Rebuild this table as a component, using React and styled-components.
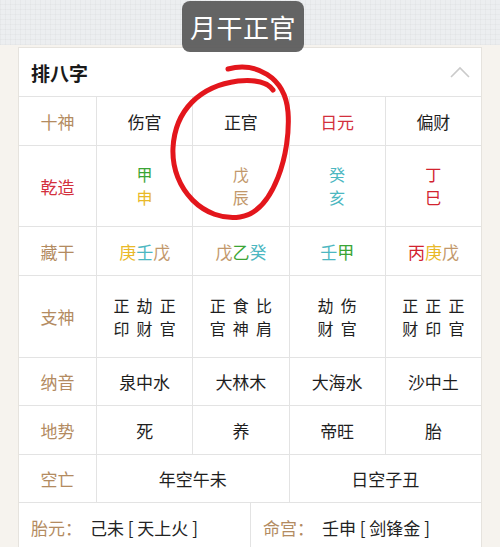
import React from "react";
import styled, { createGlobalStyle } from "styled-components";

const GlobalStyle = createGlobalStyle`
  html, body {
    margin: 0;
    padding: 0;
    background: #f6f3ee;
    overflow: hidden;
  }
  body {
    font-family: "Noto Sans CJK SC", "Noto Sans", sans-serif;
    color: #222;
  }
`;

const Page = styled.div`
  position: relative;
  width: 500px;
  height: 547px;
  overflow: hidden;
  background: #f6f3ee;
`;

const TopBar = styled.div`
  height: 45px;
  background-color: #eceef0;
  background-image: repeating-linear-gradient(
      0deg,
      rgba(0, 0, 0, 0.025) 0 1px,
      transparent 1px 5px
    ),
    repeating-linear-gradient(
      90deg,
      rgba(0, 0, 0, 0.025) 0 1px,
      transparent 1px 5px
    );
`;

const Body = styled.div`
  padding: 2px 18px 0;
`;

const Card = styled.div`
  background: #fff;
  border: 1px solid #e6e3de;
  border-bottom: none;
`;

const CardHeader = styled.div`
  display: flex;
  align-items: center;
  justify-content: space-between;
  height: 48px;
  padding: 0 10px 0 12px;
  border-bottom: 1px solid #e3e3e3;
`;

const CardTitle = styled.div`
  font-size: 19px;
  font-weight: 700;
  color: #1a1a1a;
`;

const Row = styled.div`
  display: grid;
  grid-template-columns: 77px repeat(4, 1fr);
  height: ${({ $h }) => $h}px;
  border-bottom: 1px solid #e3e3e3;
`;

const Label = styled.div`
  display: flex;
  align-items: center;
  justify-content: center;
  font-size: 17px;
  color: ${({ $red }) => ($red ? "#d3303d" : "#b38b61")};
`;

const Cell = styled.div`
  display: flex;
  align-items: center;
  justify-content: center;
  border-left: 1px solid #e3e3e3;
  font-size: 17px;
  color: ${({ $color }) => $color || "#1e1e1e"};
  grid-column: span ${({ $span }) => $span || 1};
`;

const Stack = styled.div`
  display: flex;
  flex-direction: column;
  align-items: center;
  font-size: 16px;
  line-height: 23px;
  color: #1e1e1e;
`;

const Ch = styled.span`
  color: ${({ $c }) => $c};
`;

const StackCh = styled.div`
  color: ${({ $c }) => $c || "inherit"};
`;

const Gods = styled.div`
  display: flex;
  gap: 7px;
`;

const InfoRow = styled.div`
  display: grid;
  grid-template-columns: 1fr 1fr;
  height: 48px;
`;

const InfoCell = styled.div`
  display: flex;
  align-items: center;
  padding-left: 12px;
  font-size: 17px;
  border-left: ${({ $border }) => ($border ? "1px solid #e3e3e3" : "none")};
`;

const InfoKey = styled.span`
  color: #b38b61;
  margin-right: 8px;
`;

const Toast = styled.div`
  position: absolute;
  left: 182px;
  top: 1px;
  width: 122px;
  height: 51px;
  border-radius: 8px;
  background: rgba(88, 88, 88, 0.92);
  color: #fff;
  font-size: 26px;
  display: flex;
  align-items: center;
  justify-content: center;
  letter-spacing: 0.5px;
`;

const Scribble = styled.svg`
  position: absolute;
  left: 0;
  top: 0;
  pointer-events: none;
`;

const C = {
  green: "#3ba535",
  yellow: "#e9b928",
  tan: "#c2986b",
  teal: "#4cb7c1",
  red: "#d2232f",
};

const colored = (list) =>
  list.map(([t, c], i) => (
    <Ch key={i} $c={c}>
      {t}
    </Ch>
  ));

const stacked = (list) =>
  list.map(([t, c], i) => (
    <StackCh key={i} $c={c}>
      {t}
    </StackCh>
  ));

const gods = [
  [["正", "印"], ["劫", "财"], ["正", "官"]],
  [["正", "官"], ["食", "神"], ["比", "肩"]],
  [["劫", "财"], ["伤", "官"]],
  [["正", "财"], ["正", "印"], ["正", "官"]],
];

export default function App() {
  return (
    <Page>
      <GlobalStyle />
      <TopBar />
      <Body>
        <Card>
          <CardHeader>
            <CardTitle>排八字</CardTitle>
            <svg width="22" height="14" viewBox="0 0 22 14">
              <path
                d="M2 12 L11 3 L20 12"
                fill="none"
                stroke="#cacaca"
                strokeWidth="1.6"
              />
            </svg>
          </CardHeader>

          <Row $h={48}>
            <Label>十神</Label>
            <Cell>伤官</Cell>
            <Cell>正官</Cell>
            <Cell $color="#d3303d">日元</Cell>
            <Cell>偏财</Cell>
          </Row>

          <Row $h={80}>
            <Label $red>乾造</Label>
            <Cell>
              <Stack>{stacked([["甲", C.green], ["申", C.yellow]])}</Stack>
            </Cell>
            <Cell>
              <Stack>{stacked([["戊", C.tan], ["辰", C.tan]])}</Stack>
            </Cell>
            <Cell>
              <Stack>{stacked([["癸", C.teal], ["亥", C.teal]])}</Stack>
            </Cell>
            <Cell>
              <Stack>{stacked([["丁", C.red], ["巳", C.red]])}</Stack>
            </Cell>
          </Row>

          <Row $h={48}>
            <Label>藏干</Label>
            <Cell>{colored([["庚", C.yellow], ["壬", C.teal], ["戊", C.tan]])}</Cell>
            <Cell>{colored([["戊", C.tan], ["乙", C.green], ["癸", C.teal]])}</Cell>
            <Cell>{colored([["壬", C.teal], ["甲", C.green]])}</Cell>
            <Cell>{colored([["丙", C.red], ["庚", C.yellow], ["戊", C.tan]])}</Cell>
          </Row>

          <Row $h={81}>
            <Label>支神</Label>
            {gods.map((g, i) => (
              <Cell key={i}>
                <Gods>
                  {g.map((pair, j) => (
                    <Stack key={j}>{stacked([[pair[0]], [pair[1]]])}</Stack>
                  ))}
                </Gods>
              </Cell>
            ))}
          </Row>

          <Row $h={47}>
            <Label>纳音</Label>
            <Cell>泉中水</Cell>
            <Cell>大林木</Cell>
            <Cell>大海水</Cell>
            <Cell>沙中土</Cell>
          </Row>

          <Row $h={48}>
            <Label>地势</Label>
            <Cell>死</Cell>
            <Cell>养</Cell>
            <Cell>帝旺</Cell>
            <Cell>胎</Cell>
          </Row>

          <Row $h={47}>
            <Label>空亡</Label>
            <Cell $span={2}>年空午未</Cell>
            <Cell $span={2}>日空子丑</Cell>
          </Row>

          <InfoRow>
            <InfoCell>
              <InfoKey>胎元：</InfoKey>己未 [ 天上火 ]
            </InfoCell>
            <InfoCell $border>
              <InfoKey>命宫：</InfoKey>壬申 [ 剑锋金 ]
            </InfoCell>
          </InfoRow>
        </Card>
      </Body>

      <Toast>月干正官</Toast>

      <Scribble width="500" height="547" viewBox="0 0 500 547">
        <path
          d="M228 69 C255 62 285 76 288 112 C291 152 274 212 240 217 C205 222 171 190 173 148 C175 110 200 86 238 81 C256 79 268 83 273 90"
          fill="none"
          stroke="#e3161c"
          strokeWidth="5"
          strokeLinecap="round"
        />
      </Scribble>
    </Page>
  );
}
